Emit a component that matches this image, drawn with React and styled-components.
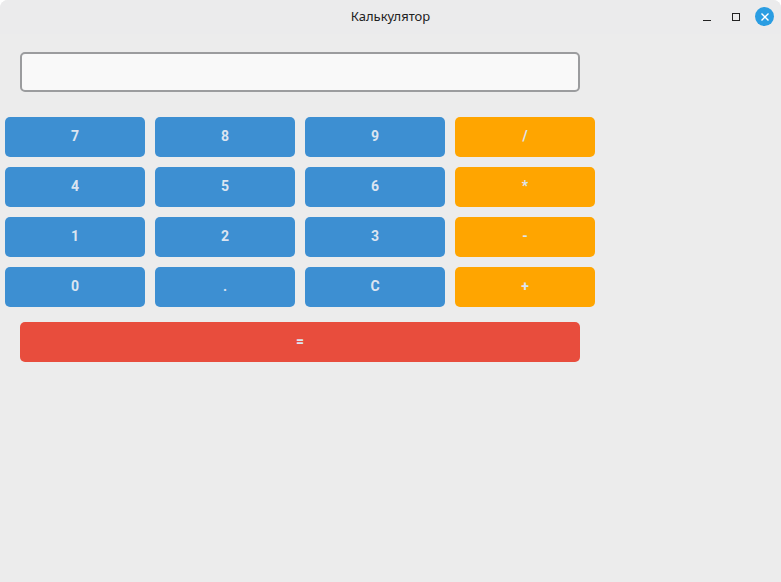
import React from "react";
import styled, { createGlobalStyle } from "styled-components";

const GlobalStyle = createGlobalStyle`
  html, body {
    margin: 0;
    padding: 0;
    background: #ffffff;
  }
  body {
    font-family: "Noto Sans", "Open Sans", sans-serif;
  }
`;

const Window = styled.div`
  width: 781px;
  height: 582px;
  background: #ececec;
  border-radius: 8px 8px 0 0;
  overflow: hidden;
  display: flex;
  flex-direction: column;
`;

const TitleBar = styled.div`
  height: 34px;
  flex: none;
  background: #ebebec;
  display: flex;
  align-items: center;
  justify-content: center;
  position: relative;
`;

const Title = styled.div`
  font-family: "Noto Sans", sans-serif;
  font-size: 13px;
  color: #222;
  margin-bottom: 2px;
`;

const Controls = styled.div`
  position: absolute;
  right: 7px;
  top: 7px;
  display: flex;
  align-items: center;
  gap: 10px;
`;

const CtrlButton = styled.div`
  width: 19px;
  height: 19px;
  display: flex;
  align-items: center;
  justify-content: center;
  border-radius: 50%;
  background: ${(p) => (p.$close ? "#2a9de2" : "transparent")};
`;

const Body = styled.div`
  display: flex;
  flex-direction: column;
  padding: 18px 0 0 0;
`;

const Display = styled.input`
  box-sizing: border-box;
  margin-left: 20px;
  width: 560px;
  height: 40px;
  border: 2px solid #9b9c9e;
  border-radius: 5px;
  background: #f9f9f9;
  outline: none;
`;

const Keypad = styled.div`
  margin: 25px 0 0 5px;
  display: grid;
  grid-template-columns: repeat(4, 140px);
  grid-auto-rows: 40px;
  gap: 10px;
`;

const colors = {
  num: "#3d8fd2",
  op: "#ffa500",
  eq: "#e84d3d",
};

const Key = styled.button`
  border: none;
  border-radius: 5px;
  background: ${(p) => colors[p.$kind]};
  color: #dbe5f1;
  font-family: Roboto, "Liberation Sans", sans-serif;
  font-weight: 700;
  font-size: 14px;
  padding: 0 0 2px 0;
  cursor: pointer;
`;

const EqualsKey = styled(Key)`
  margin: 15px 0 0 20px;
  width: 560px;
  height: 40px;
`;

const rows = [
  ["7", "8", "9", "/"],
  ["4", "5", "6", "*"],
  ["1", "2", "3", "-"],
  ["0", ".", "C", "+"],
];

const App = () => {
  return (
    <>
      <GlobalStyle />
      <Window>
        <TitleBar>
          <Title>Калькулятор</Title>
          <Controls>
            <CtrlButton>
              <svg width="10" height="10" viewBox="0 0 10 10">
                <path d="M1 8.5h8" stroke="#222" strokeWidth="1" />
              </svg>
            </CtrlButton>
            <CtrlButton>
              <svg width="10" height="10" viewBox="0 0 10 10">
                <rect x="1.5" y="1.5" width="7" height="7" fill="none" stroke="#222" strokeWidth="1" />
              </svg>
            </CtrlButton>
            <CtrlButton $close>
              <svg width="10" height="10" viewBox="0 0 10 10">
                <path d="M1.5 1.5l7 7M8.5 1.5l-7 7" stroke="#fff" strokeWidth="1.4" />
              </svg>
            </CtrlButton>
          </Controls>
        </TitleBar>
        <Body>
          <Display type="text" />
          <Keypad>
            {rows.flat().map((k) => (
              <Key key={k} $kind={/[0-9.C]/.test(k) ? "num" : "op"}>
                {k}
              </Key>
            ))}
          </Keypad>
          <EqualsKey $kind="eq">=</EqualsKey>
        </Body>
      </Window>
    </>
  );
};

export default App;
